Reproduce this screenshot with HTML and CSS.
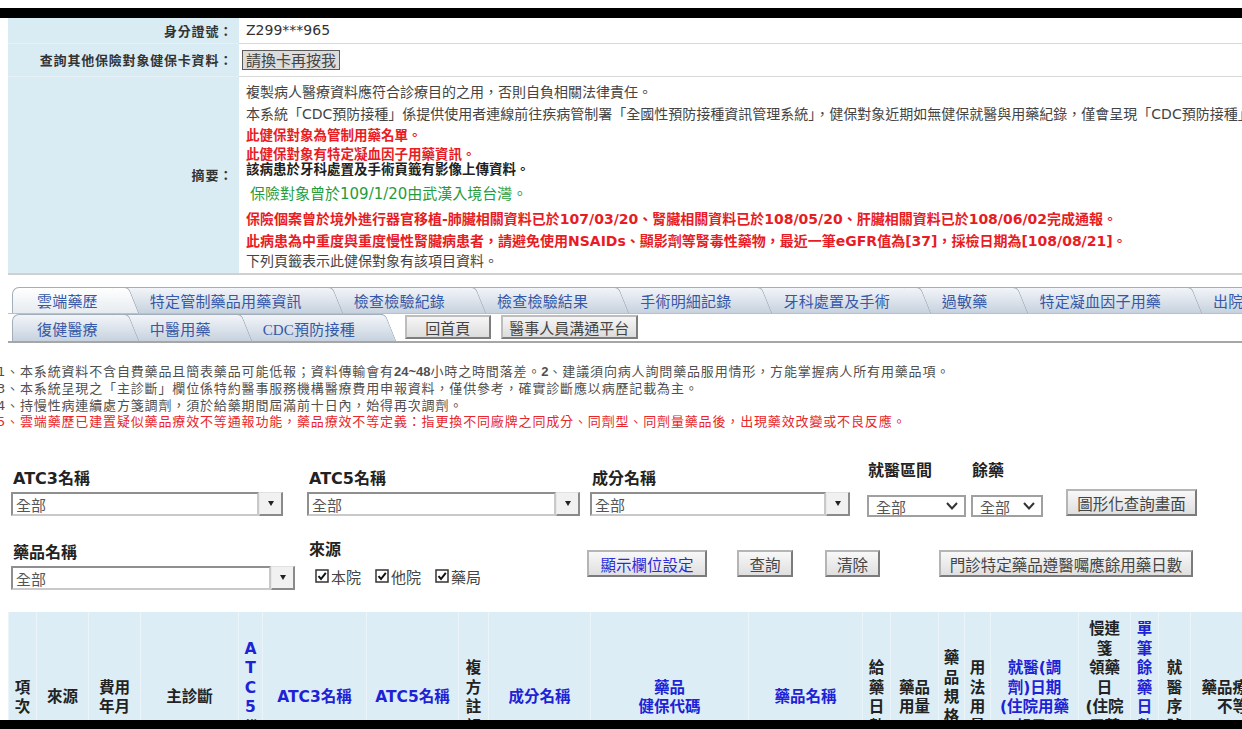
FILE: index.html
```html
<!DOCTYPE html>
<html lang="zh-Hant">
<head>
<meta charset="utf-8">
<title>雲端藥歷</title>
<link rel="stylesheet" href="styles.css">
</head>
<body>
<div class="bar bar-top"></div>
<div class="screen">
<div class="page">
  <table class="info">
    <tr class="r1"><th>身分證號：</th><td class="id">Z299***965</td></tr>
    <tr class="r2"><th>查詢其他保險對象健保卡資料：</th><td><button class="btn-card">請換卡再按我</button></td></tr>
    <tr class="r3"><th>摘要：</th><td class="summary">
      <div class="s t-gray l1">複製病人醫療資料應符合診療目的之用，否則自負相關法律責任。</div>
      <div class="s t-gray l2">本系統「CDC預防接種」係提供使用者連線前往疾病管制署「全國性預防接種資訊管理系統」，健保對象近期如無健保就醫與用藥紀錄，僅會呈現「CDC預防接種」頁籤資料。</div>
      <div class="s t-red l3">此健保對象為管制用藥名單。</div>
      <div class="s t-red l4">此健保對象有特定凝血因子用藥資訊。</div>
      <div class="s t-dark l5">該病患於牙科處置及手術頁籤有影像上傳資料。</div>
      <div class="s t-green l6">保險對象曾於109/1/20由武漢入境台灣。</div>
      <div class="s t-red l7">保險個案曾於境外進行器官移植-肺臟相關資料已於107/03/20、腎臟相關資料已於108/05/20、肝臟相關資料已於108/06/02完成通報。</div>
      <div class="s t-red l8">此病患為中重度與重度慢性腎臟病患者，請避免使用NSAIDs、顯影劑等腎毒性藥物，最近一筆eGFR值為[37]，採檢日期為[108/08/21]。</div>
      <div class="s t-gray l9">下列頁籤表示此健保對象有該項目資料。</div>
    </td></tr>
  </table>

  <div class="tabs">
    <div class="tab-row row1">
      <span class="tab active">雲端藥歷</span>
      <span class="tab">特定管制藥品用藥資訊</span>
      <span class="tab">檢查檢驗紀錄</span>
      <span class="tab">檢查檢驗結果</span>
      <span class="tab">手術明細記錄</span>
      <span class="tab">牙科處置及手術</span>
      <span class="tab">過敏藥</span>
      <span class="tab">特定凝血因子用藥</span>
      <span class="tab">出院帶藥</span>
    </div>
    <div class="tab-row row2">
      <span class="tab">復健醫療</span>
      <span class="tab">中醫用藥</span>
      <span class="tab">CDC預防接種</span>
      <button class="nav-btn home">回首頁</button>
      <button class="nav-btn comm">醫事人員溝通平台</button>
    </div>
  </div>

  <div class="notes">
    <div>1、本系統資料不含自費藥品且簡表藥品可能低報；資料傳輸會有<span class="num">24~48</span>小時之時間落差。<span class="num">2</span>、建議須向病人詢問藥品服用情形，方能掌握病人所有用藥品項。</div>
    <div>3、本系統呈現之「主診斷」欄位係特約醫事服務機構醫療費用申報資料，僅供參考，確實診斷應以病歷記載為主。</div>
    <div>4、持慢性病連續處方箋調劑，須於給藥期間屆滿前十日內，始得再次調劑。</div>
    <div class="note-red">5、雲端藥歷已建置疑似藥品療效不等通報功能，藥品療效不等定義：指更換不同廠牌之同成分、同劑型、同劑量藥品後，出現藥效改變或不良反應。</div>
  </div>

  <div class="frow frow1">
    <div class="fg fg-atc3">
      <div class="flabel">ATC3名稱</div>
      <div class="combo"><span class="combo-input">全部</span><span class="combo-btn"><i class="tri"></i></span></div>
    </div>
    <div class="fg fg-atc5">
      <div class="flabel">ATC5名稱</div>
      <div class="combo"><span class="combo-input">全部</span><span class="combo-btn"><i class="tri"></i></span></div>
    </div>
    <div class="fg fg-ing">
      <div class="flabel">成分名稱</div>
      <div class="combo"><span class="combo-input">全部</span><span class="combo-btn"><i class="tri"></i></span></div>
    </div>
    <div class="fg fg-period">
      <div class="flabel sel-label">就醫區間</div>
      <div class="sel"><span>全部</span><svg class="chev" width="12" height="8" viewBox="0 0 12 8"><polyline points="1,1 6,6.5 11,1" fill="none" stroke="#333" stroke-width="2"/></svg></div>
    </div>
    <div class="fg fg-rem">
      <div class="flabel sel-label">餘藥</div>
      <div class="sel"><span>全部</span><svg class="chev" width="12" height="8" viewBox="0 0 12 8"><polyline points="1,1 6,6.5 11,1" fill="none" stroke="#333" stroke-width="2"/></svg></div>
    </div>
    <button class="fbtn b-graph">圖形化查詢畫面</button>
  </div>

  <div class="frow frow2">
    <div class="fg fg-drug">
      <div class="flabel">藥品名稱</div>
      <div class="combo"><span class="combo-input">全部</span><span class="combo-btn"><i class="tri"></i></span></div>
    </div>
    <div class="fg fg-src">
      <div class="flabel src-label">來源</div>
      <div class="checks">
        <span class="chk"><svg width="14" height="14" viewBox="0 0 14 14"><rect x="1" y="1" width="12" height="12" fill="#fff" stroke="#333" stroke-width="1.5"/><path d="M3.5 7.2 L6 10 L10.8 3.8" fill="none" stroke="#111" stroke-width="2"/></svg>本院</span>
        <span class="chk"><svg width="14" height="14" viewBox="0 0 14 14"><rect x="1" y="1" width="12" height="12" fill="#fff" stroke="#333" stroke-width="1.5"/><path d="M3.5 7.2 L6 10 L10.8 3.8" fill="none" stroke="#111" stroke-width="2"/></svg>他院</span>
        <span class="chk"><svg width="14" height="14" viewBox="0 0 14 14"><rect x="1" y="1" width="12" height="12" fill="#fff" stroke="#333" stroke-width="1.5"/><path d="M3.5 7.2 L6 10 L10.8 3.8" fill="none" stroke="#111" stroke-width="2"/></svg>藥局</span>
      </div>
    </div>
    <button class="fbtn b-cols">顯示欄位設定</button>
    <button class="fbtn b-query">查詢</button>
    <button class="fbtn b-clear">清除</button>
    <button class="fbtn b-days">門診特定藥品遵醫囑應餘用藥日數</button>
  </div>

  <table class="grid">
    <thead>
      <tr>
        <th class="c1">項<br>次</th>
        <th class="c2">來源</th>
        <th class="c3">費用<br>年月</th>
        <th class="c4">主診斷</th>
        <th class="c5 blue">A<br>T<br>C<br>5<br>代<br>碼</th>
        <th class="c6 blue">ATC3名稱</th>
        <th class="c7 blue">ATC5名稱</th>
        <th class="c8">複<br>方<br>註<br>記</th>
        <th class="c9 blue">成分名稱</th>
        <th class="c10 blue">藥品<br>健保代碼</th>
        <th class="c11 blue">藥品名稱</th>
        <th class="c12">給<br>藥<br>日<br>數</th>
        <th class="c13">藥品<br>用量</th>
        <th class="c14">藥<br>品<br>規<br>格<br>量</th>
        <th class="c15">用<br>法<br>用<br>量</th>
        <th class="c16 blue">就醫(調<br>劑)日期<br>(住院用藥<br>起日)</th>
        <th class="c17">慢連<br>箋<br>領藥<br>日<br>(住院<br>用藥<br>迄日<br>)</th>
        <th class="c18 blue">單<br>筆<br>餘<br>藥<br>日<br>數<br>(註<br>)</th>
        <th class="c19">就<br>醫<br>序<br>號</th>
        <th class="c20">藥品療效<br>不等</th>
        <th class="c21">備註</th>
      </tr>
    </thead>
  </table>
</div>
</div>
<div class="bar bar-bottom"></div>
</body>
</html>
```
FILE: styles.css
```css
* { box-sizing: border-box; }
html, body { margin: 0; padding: 0; }
body {
  width: 1242px;
  height: 729px;
  overflow: hidden;
  background: #fff;
  display: flex;
  flex-direction: column;
  font-family: "DejaVu Sans", "Noto Sans CJK TC", sans-serif;
  color: #333;
}
.bar { flex: none; background: #000; }
.bar-top { height: 10px; margin-top: 8px; }
.bar-bottom { height: 9px; }
.screen { flex: none; width: 1242px; height: 702px; overflow: hidden; }
.page { width: 1320px; padding-left: 8px; }

/* info table */
.info { border-collapse: collapse; table-layout: fixed; width: 1312px; }
.info th {
  width: 231px;
  background: #d9ecf3;
  text-align: right;
  vertical-align: middle;
  padding: 0 6px 0 0;
  font-family: "Noto Sans CJK TC", sans-serif;
  font-weight: bold;
  font-size: 13px;
  letter-spacing: 0.8px;
  color: #333;
  border-bottom: 1px solid #e6eff3;
}
.info td {
  padding: 0 0 0 7px;
  vertical-align: middle;
  white-space: nowrap;
  overflow: hidden;
  border-bottom: 1px solid #d9d9d9;
}
.r1 { height: 25px; }
.r2 { height: 33px; }
.r3 { height: 198px; }
.info .r3 th, .info .r3 td { border-bottom: 2px solid #d0d0d0; }
.info td.id { font-size: 14px; color: #333; }
.btn-card {
  height: 20px;
  padding: 0 3px;
  margin: 0 0 0 -4px;
  font-family: "Noto Sans CJK TC", sans-serif;
  font-size: 15px;
  line-height: 16px;
  color: #444;
  background: #dcdcdc;
  border: 1px solid #5a5a5a;
}
.info td.summary { vertical-align: top; padding-top: 4px; }
.s { white-space: nowrap; }
.t-gray { color: #444; font-size: 14px; }
.t-red { color: #e81c24; font-weight: bold; }
.t-dark { color: #222; font-weight: bold; }
.t-green { color: #1f9d3c; font-size: 15px; padding-left: 4px; }
.l1, .l2 { line-height: 22px; }
.l3 { font-size: 13.5px; line-height: 21px; }
.l4 { font-size: 13.5px; line-height: 17px; }
.l5 { font-size: 13.5px; line-height: 13px; }
.l6 { line-height: 25px; margin-top: 6px; }
.l7 { font-size: 14px; line-height: 24px; }
.l8 { font-size: 14px; line-height: 20px; }
.l9 { line-height: 20px; }

/* tabs */
.tabs { margin-top: 12px; width: 1312px; border-bottom: 2px solid #a6a6a6; }
.tab-row { display: flex; padding-left: 4px; }
.row1 { height: 26px; }
.row2 { height: 28px; border-top: 1px solid #b7c1cc; }
.tab {
  flex: none;
  position: relative;
  display: flex;
  align-items: center;
  padding: 0 28px 0 24px;
  font-family: "Liberation Serif", "Noto Sans CJK TC", serif;
  font-size: 15px;
  letter-spacing: 0.2px;
  color: #3658a8;
  white-space: nowrap;
  background: linear-gradient(#f2f5f9, #c7d2de);
  border-top: 1px solid #a3aebb;
}
.tab:first-child { border-left: 1px solid #a3aebb; border-top-left-radius: 7px; }
.tab::after {
  content: "";
  position: absolute;
  top: -1px;
  bottom: 0;
  right: -8px;
  width: 16px;
  background: inherit;
  border-top: 1px solid #a3aebb;
  border-right: 1px solid #a3aebb;
  border-top-right-radius: 5px;
  transform: skewX(22deg);
  z-index: 1;
}
.tab.active { background: linear-gradient(#ffffff, #e6ebf0); z-index: 2; }
.nav-btn {
  flex: none;
  height: 24px;
  margin-top: 1px;
  padding: 0;
  font-family: "Noto Sans CJK TC", sans-serif;
  font-size: 15px;
  color: #444;
  background: linear-gradient(#f6f6f6, #dcdcdc);
  border: 2px solid;
  border-color: #bdbdbd #7d7d7d #7d7d7d #bdbdbd;
}
.home { width: 86px; margin-left: 22px; }
.comm { width: 137px; margin-left: 10px; }

/* notes */
.notes {
  margin: 21px 0 0 -11px;
  font-family: "DejaVu Sans", "Noto Sans CJK TC", sans-serif;
  font-size: 13px;
  letter-spacing: 0.85px;
  line-height: 16.8px;
  color: #505050;
  white-space: nowrap;
}
.notes .num { font-family: "Liberation Sans", sans-serif; font-weight: bold; letter-spacing: 0; }
.note-red { color: #e8262b; }

/* filters */
.frow { display: flex; align-items: flex-start; }
.frow1 { margin-top: 30px; height: 58px; }
.frow2 { margin-top: 21px; height: 52px; }
.fg { flex: none; }
.flabel {
  height: 20px;
  line-height: 20px;
  margin-bottom: 3px;
  padding-left: 2px;
  font-weight: bold;
  font-size: 16px;
  color: #222;
  white-space: nowrap;
}
.flabel.sel-label { margin-bottom: 14px; padding-left: 1px; }
.flabel.src-label { margin-bottom: 6px; padding-left: 0; }
.fg-atc3 { margin: 8px 0 0 3px; width: 272px; }
.fg-atc5 { margin: 8px 0 0 24px; width: 273px; }
.fg-ing { margin: 8px 0 0 10px; width: 260px; }
.fg-period { margin-left: 17px; width: 99px; }
.fg-rem { margin-left: 5px; width: 72px; }
.fg-drug { margin: 3px 0 0 3px; width: 284px; }
.fg-src { margin-left: 14px; width: 180px; }

.combo { display: flex; height: 24px; }
.combo-input {
  flex: 1;
  display: flex;
  align-items: center;
  padding-left: 3px;
  font-size: 15px;
  color: #555;
  background: #fff;
  border: 2px solid;
  border-color: #8f8f8f #c9c9c9 #c9c9c9 #8f8f8f;
}
.combo-btn {
  flex: none;
  width: 24px;
  display: flex;
  align-items: center;
  justify-content: center;
  background: #f1f1f1;
  border-top: 1px solid #e0e0e0;
  border-left: 1px solid #e8e8e8;
  border-right: 2px solid #8a8a8a;
  border-bottom: 2px solid #8a8a8a;
}
.tri {
  width: 0;
  height: 0;
  border-left: 3.5px solid transparent;
  border-right: 3.5px solid transparent;
  border-top: 5px solid #222;
}
.sel {
  height: 22px;
  display: flex;
  align-items: center;
  justify-content: space-between;
  padding: 0 6px 0 7px;
  font-size: 15px;
  color: #555;
  background: #fff;
  border: 2px solid #a0a0a0;
}
.checks {
  display: flex;
  align-items: center;
  gap: 14px;
  height: 20px;
  padding-left: 6px;
  font-size: 15px;
  color: #444;
}
.chk { display: flex; align-items: center; gap: 2px; }

.fbtn {
  flex: none;
  height: 27px;
  padding: 0;
  font-family: "Noto Sans CJK TC", sans-serif;
  font-size: 15.5px;
  color: #444;
  background: linear-gradient(#f8f8f8, #dfdfdf);
  border: 2px solid;
  border-color: #b5b5b5 #7b7b7b #7b7b7b #b5b5b5;
}
.b-graph { margin: 28px 0 0 23px; width: 131px; }
.b-cols { margin: 10px 0 0 98px; width: 120px; color: #2b2bd9; }
.b-query { margin: 10px 0 0 30px; width: 56px; }
.b-clear { margin: 10px 0 0 32px; width: 55px; }
.b-days { margin: 10px 0 0 59px; width: 254px; }

/* grid header */
.grid { margin-top: 20px; border-collapse: collapse; table-layout: fixed; width: 1282px; }
.grid th {
  height: 166px;
  padding: 6px 0 0 0;
  background: #dcedf5;
  font-family: "DejaVu Sans", "Noto Sans CJK TC", sans-serif;
  font-weight: bold;
  font-size: 15.5px;
  line-height: 19.5px;
  color: #222;
  text-align: center;
  vertical-align: middle;
  white-space: nowrap;
  overflow: hidden;
  border-left: 1px solid #eaf4f9;
}
.grid th.blue { color: #1e22d6; }
.c1 { width: 28px; }
.c2 { width: 52px; }
.c3 { width: 52px; }
.c4 { width: 98px; }
.c5 { width: 24px; }
.c6 { width: 104px; }
.c7 { width: 92px; }
.c8 { width: 30px; }
.c9 { width: 102px; }
.c10 { width: 158px; }
.c11 { width: 114px; }
.c12 { width: 28px; }
.c13 { width: 48px; }
.c14 { width: 26px; }
.c15 { width: 26px; }
.c16 { width: 88px; }
.c17 { width: 52px; }
.c18 { width: 28px; }
.c19 { width: 32px; }
.c20 { width: 84px; }
.c21 { width: 16px; }
```
